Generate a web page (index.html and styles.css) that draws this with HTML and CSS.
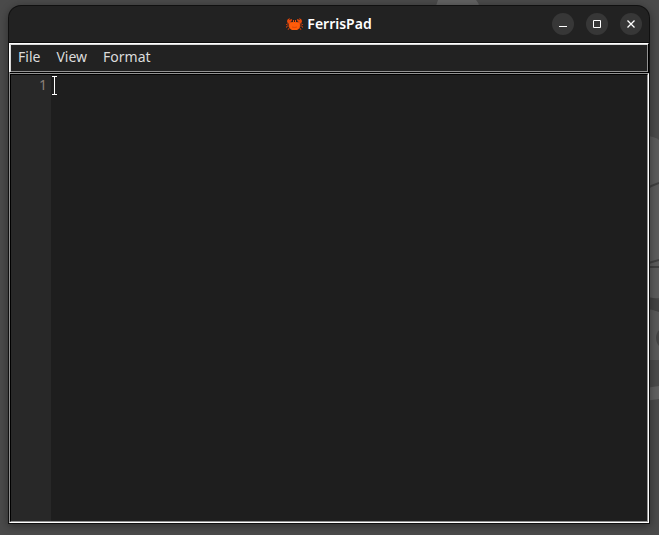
FILE: index.html
```html
<!DOCTYPE html>
<html lang="en">
<head>
<meta charset="utf-8">
<title>FerrisPad</title>
<link rel="stylesheet" href="styles.css">
</head>
<body>
<svg class="wallpaper wallpaper-top" viewBox="0 0 44 6" aria-hidden="true"><path d="M0 6 2 0h38q3 3 3 6z" fill="#626262"/></svg>
<svg class="wallpaper wallpaper-side" viewBox="0 0 14 280" aria-hidden="true">
  <path d="M0 6q9 0 14 4v122H0z" fill="#5c5c5c"/>
  <path d="M0 178h14v52H0z" fill="#5a5a5a"/>
  <path d="M0 132h14v36H0z" fill="#5c5c5c"/>
  <path d="M0 60q7-5 14-7M0 134q7-2 14-4M0 137h14" fill="none" stroke="#404040" stroke-width="2"/>
  <path d="M0 167q7 0 14 3v12q-7-3-14-3z" fill="#424242"/>
  <ellipse cx="17" cy="208" rx="6" ry="9" fill="#444"/>
  <path d="M0 258l14-2v13l-14 2z" fill="#606060"/>
</svg>
<div class="window">
  <header class="titlebar">
    <h1 class="title">
      <svg class="crab" viewBox="0 0 17 14" aria-hidden="true">
        <path d="M4 7 1 7 0 8M4 9H1l-1 2M5 10 3 11 2 13M13 7h3l1 1M13 9h3l1 2M12 10l2 1 1 2" fill="none" stroke="#b83c10"/>
        <path d="M5 7Q1 7 1 4 1 2 4 1L3 3l3-1q0 3-2 3l2 1zM12 7q4 0 4-3 0-2-3-3l1 2-3-1q0 3 2 3l-2 1z" fill="#e84a0c"/>
        <path d="M3 8q0-3 4-3h3q4 0 4 3 0 4-3 5H6q-3-1-3-5z" fill="#ff5c0a"/>
        <path d="M6 3h2v3H6zM9 3h2v3H9z" fill="#f0540c"/>
        <path d="M6 3h1v2H6zM10 3h1v2h-1z" fill="#28211f"/>
        <path d="M6 10q3 1 5 0" fill="none" stroke="#dd4607"/>
      </svg>
      <span>FerrisPad</span>
    </h1>
    <div class="controls">
      <button class="control" type="button" aria-label="Minimize"><svg viewBox="0 0 22 22"><path d="M7 13h8v1H7z" fill="#fff"/></svg></button>
      <button class="control" type="button" aria-label="Maximize"><svg viewBox="0 0 22 22"><path d="M7.500 7.500h7v7h-7z" fill="none" stroke="#fff"/></svg></button>
      <button class="control" type="button" aria-label="Close"><svg viewBox="0 0 22 22"><path d="m7.500 7.500 7 7m0-7-7 7" fill="none" stroke="#fff" stroke-width="1.300"/></svg></button>
    </div>
  </header>
  <nav class="menubar" aria-label="Main menu">
    <button class="menu" type="button">File</button>
    <button class="menu" type="button">View</button>
    <button class="menu" type="button">Format</button>
  </nav>
  <main class="editor">
    <div class="gutter">1</div>
    <textarea class="text" aria-label="Document text" spellcheck="false"></textarea>
    <svg class="pointer" viewBox="0 0 5 19" aria-hidden="true"><path d="M0 0h5v1H3v17h2v1H0v-1h2V1H0z" fill="#fff"/></svg>
  </main>
</div>
</body>
</html>
```
FILE: styles.css
```css
* {
  box-sizing: border-box;
}

body {
  margin: 0;
  height: 100vh;
  padding: 6px 10px 12px 9px;
  display: flex;
  overflow: hidden;
  background: #4a4a4a;
  font-family: "Noto Sans", "Open Sans", sans-serif;
}

button {
  padding: 0;
  border: 0;
  background: none;
  font: inherit;
}

.wallpaper {
  position: absolute;
}

.wallpaper-top {
  left: 436px;
  top: 0;
  width: 44px;
}

.wallpaper-side {
  right: 0;
  top: 130px;
  width: 14px;
}

.window {
  position: relative;
  flex: 1;
  display: flex;
  flex-direction: column;
  border-radius: 12px 12px 0 0;
  background: #222;
  box-shadow: 0 0 0 1px #101010, 0 2px 8px 1px rgba(0, 0, 0, 0.4);
}

.titlebar {
  height: 37px;
  flex: none;
  display: grid;
  grid-template-columns: 1fr auto 1fr;
  align-items: center;
  padding: 0 7px;
  border-bottom: 1px solid #0c0c0c;
}

.title {
  grid-column: 2;
  display: flex;
  align-items: center;
  gap: 4px;
  margin: 0;
  color: #fff;
  font-size: 14px;
  line-height: 18px;
  font-weight: 600;
}

.crab {
  width: 17px;
  height: 14px;
}

.controls {
  display: flex;
  justify-content: flex-end;
  gap: 12px;
}

.control {
  width: 22px;
  height: 22px;
  border-radius: 50%;
  background: #373737;
}

.control svg {
  display: block;
}

.menubar {
  height: 30px;
  flex: none;
  display: flex;
  align-items: flex-start;
  gap: 16px;
  padding: 3px 8px;
  border: 1px solid;
  border-color: #fff #000 #000 #fff;
  background: #222;
  box-shadow: inset 1px 1px #d8d8d8, inset -1px -1px #929292;
}

.menu {
  color: #dcdcdc;
  font-size: 14px;
  line-height: 20px;
}

.editor {
  position: relative;
  flex: 1;
  display: flex;
  border: 1px solid;
  border-color: #929292 #fff #fff #929292;
  background: #1e1e1e;
}

.editor::after {
  content: "";
  position: absolute;
  inset: 0;
  border: 1px solid;
  border-color: #000 #929292 #929292 #000;
  pointer-events: none;
}

.gutter {
  width: 41px;
  padding: 2px 4px;
  background: #282828;
  color: #8c8078;
  font-size: 14px;
  line-height: 18px;
  text-align: right;
}

.text {
  flex: 1;
  padding: 2px 3px;
  border: 0;
  outline: 0;
  resize: none;
  background: transparent;
  color: #dcdcdc;
  font-family: "Noto Sans Mono", "DejaVu Sans Mono", monospace;
  font-size: 14px;
  line-height: 18px;
}

.pointer {
  position: absolute;
  left: 42px;
  top: 2px;
  width: 5px;
  height: 19px;
}
```
